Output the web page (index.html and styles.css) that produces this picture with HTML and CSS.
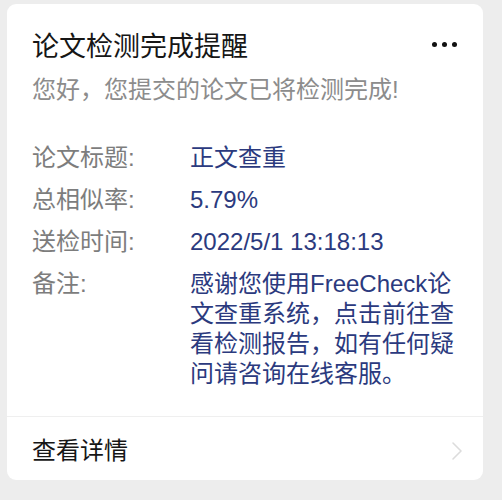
FILE: index.html
```html
<!DOCTYPE html>
<html lang="zh-CN">
<head>
<meta charset="utf-8">
<link rel="stylesheet" href="styles.css">
</head>
<body>
<div class="card">
  <div class="head">
    <div class="title-row">
      <div class="title">论文检测完成提醒</div>
      <div class="more"><span></span><span></span><span></span></div>
    </div>
    <div class="subtitle">您好，您提交的论文已将检测完成!</div>
    <div class="rows">
      <div class="row"><div class="label">论文标题:</div><div class="value">正文查重</div></div>
      <div class="row"><div class="label">总相似率:</div><div class="value">5.79%</div></div>
      <div class="row"><div class="label">送检时间:</div><div class="value">2022/5/1 13:18:13</div></div>
      <div class="row"><div class="label">备注:</div><div class="value remark">感谢您使用FreeCheck论文查重系统，点击前往查看检测报告，如有任何疑问请咨询在线客服。</div></div>
    </div>
  </div>
  <div class="foot">
    <div class="foot-text">查看详情</div>
    <svg class="chev" width="12" height="20" viewBox="0 0 12 20"><path d="M2 2 L10 10 L2 18" fill="none" stroke="#dcdcdc" stroke-width="1.6" stroke-linecap="round" stroke-linejoin="round"/></svg>
  </div>
</div>
</body>
</html>
```
FILE: styles.css
```css
html, body {
  margin: 0;
  padding: 0;
}
body {
  background: #ededed;
  width: 502px;
  height: 500px;
  padding: 4px 0 0 7px;
  box-sizing: border-box;
  font-family: "Liberation Sans", "Noto Sans CJK SC", sans-serif;
}
.card {
  width: 476px;
  height: 476px;
  background: #fff;
  border-radius: 9px;
  box-sizing: border-box;
  display: flex;
  flex-direction: column;
  overflow: hidden;
}
.head {
  padding: 25px 26px 0 25px;
  border-bottom: 1px solid #efefef;
  height: 413px;
  box-sizing: border-box;
}
.title-row {
  display: flex;
  align-items: center;
  justify-content: space-between;
  height: 36px;
}
.title {
  font-size: 27px;
  line-height: 36px;
  color: #161616;
}
.more {
  display: flex;
  gap: 5px;
  margin-top: -6px;
}
.more span {
  width: 5px;
  height: 5px;
  border-radius: 50%;
  background: #111;
}
.subtitle {
  margin-top: 8px;
  font-size: 24px;
  line-height: 34px;
  color: #8c8c8c;
}
.rows {
  margin-top: 36px;
  display: flex;
  flex-direction: column;
  gap: 12px;
}
.row {
  display: flex;
  font-size: 24px;
  line-height: 30px;
}
.label {
  width: 158px;
  flex: none;
  color: #7d7d7d;
}
.value {
  color: #2b3a7e;
}
.remark {
  width: 270px;
  word-break: break-all;
}
.foot {
  flex: 1;
  display: flex;
  align-items: center;
  justify-content: space-between;
  padding: 0 20px 0 25px;
}
.foot-text {
  font-size: 24px;
  line-height: 30px;
  color: #161616;
  margin-top: 4px;
}
.chev {
  margin-top: 4px;
}
```
